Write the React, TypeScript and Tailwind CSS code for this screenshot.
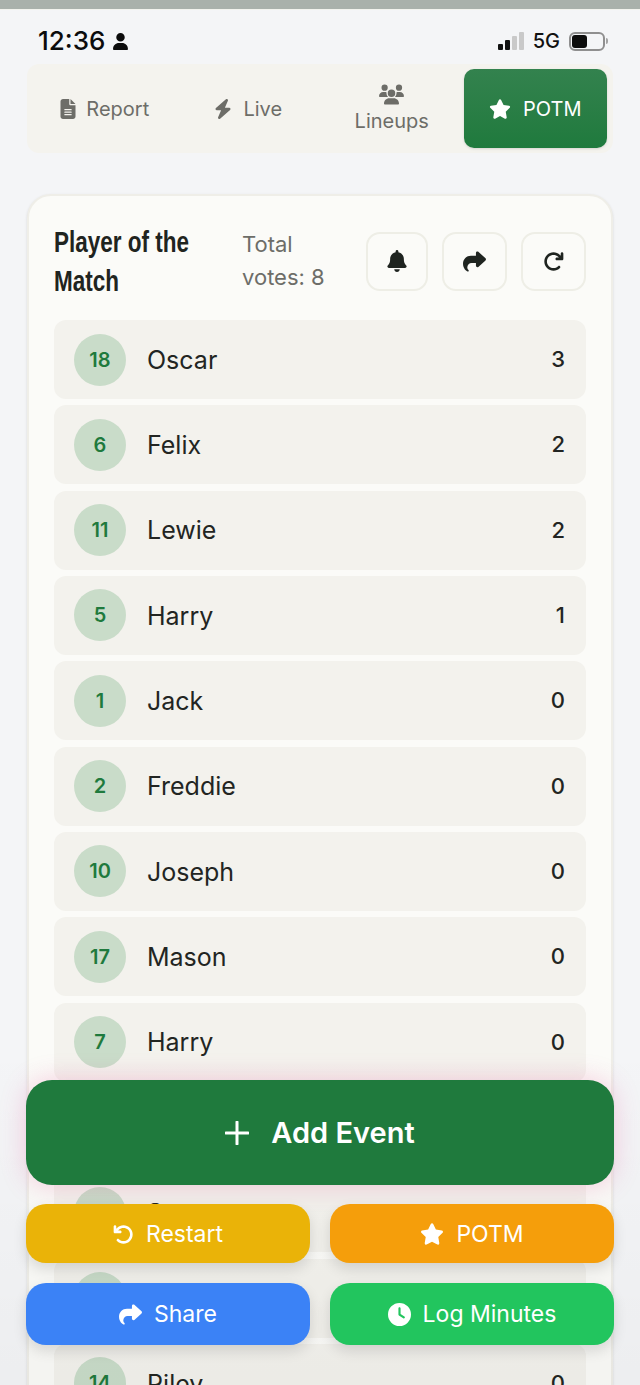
import type { ReactNode } from "react";
import { FaArrowRotateLeft, FaArrowRotateRight, FaBell, FaBolt, FaClock, FaFileLines, FaShare, FaStar, FaUser, FaUsers } from "react-icons/fa6";

const players = [
  { no: 18, name: "Oscar", votes: 3 },
  { no: 6, name: "Felix", votes: 2 },
  { no: 11, name: "Lewie", votes: 2 },
  { no: 5, name: "Harry", votes: 1 },
  { no: 1, name: "Jack", votes: 0 },
  { no: 2, name: "Freddie", votes: 0 },
  { no: 10, name: "Joseph", votes: 0 },
  { no: 17, name: "Mason", votes: 0 },
  { no: 7, name: "Harry", votes: 0 },
  { no: 9, name: "Noah", votes: 0 },
  { no: 8, name: "Sam", votes: 0 },
  { no: 4, name: "Leo", votes: 0 },
  { no: 14, name: "Riley", votes: 0 },
];

function StatusBar() {
  return (
    <div className="flex h-[54px] items-center justify-between pl-[38px] pr-[32px] pt-[8px]">
      <div className="flex items-center gap-[7px] text-[26px] font-medium leading-none text-[#0c0c0c]">
        <span>12:36</span>
        <FaUser className="size-[17px]" />
      </div>
      <div className="flex items-center gap-[9px]">
        <div className="flex items-end gap-[2px]">
          <div className="h-[6px] w-[5px] rounded-[1px] bg-[#111]" />
          <div className="h-[10px] w-[5px] rounded-[1px] bg-[#111]" />
          <div className="h-[14px] w-[5px] rounded-[1px] bg-[#c9c9c9]" />
          <div className="h-[18px] w-[5px] rounded-[1px] bg-[#c9c9c9]" />
        </div>
        <span className="text-[20px] font-medium leading-none text-[#111]">5G</span>
        <div className="flex items-center gap-[1px]">
          <div className="h-[19px] w-[36px] rounded-[6px] border-2 border-[#8f8f8f] p-[1px]">
            <div className="h-full w-[15px] rounded-[3px] bg-[#0c0c0c]" />
          </div>
          <div className="h-[6px] w-[2px] rounded-r bg-[#a3a3a3]" />
        </div>
      </div>
    </div>
  );
}

function Tabs() {
  return (
    <div className="mx-[27px] grid h-[89px] grid-cols-4 items-center rounded-[12px] bg-[#f4f3ee] px-[6px] text-[20px] text-[#6d6d68]">
      <div className="flex items-center justify-center gap-[8px] pr-[2px]">
        <FaFileLines className="size-[20px]" />
        <span>Report</span>
      </div>
      <div className="flex items-center justify-center gap-[10px] pr-[1px]">
        <FaBolt className="size-[20px]" />
        <span>Live</span>
      </div>
      <div className="flex flex-col items-center pb-[1px]">
        <FaUsers className="size-[25px]" />
        <span className="leading-[28px]">Lineups</span>
      </div>
      <div className="flex h-[79px] items-center justify-center gap-[12px] rounded-[10px] bg-gradient-to-b from-[#33824e] to-[#1f7a3d] text-white shadow-sm">
        <FaStar className="size-[22px]" />
        <span>POTM</span>
      </div>
    </div>
  );
}

function IconButton({ width, children }: { width: string; children: ReactNode }) {
  return (
    <div className={`flex h-[59px] items-center justify-center rounded-[14px] border-2 border-[#eeeee6] text-[#1f2420] ${width}`}>
      {children}
    </div>
  );
}

function PlayerRow({ no, name, votes }: { no: number; name: string; votes: number }) {
  return (
    <div className="flex h-[79px] items-center rounded-[12px] bg-[#f3f2ed] pl-[20px] pr-[21px]">
      <div className="flex size-[52px] shrink-0 items-center justify-center rounded-full bg-[#c9dcc9] text-[20px] font-semibold text-[#1f7a3d]">
        {no}
      </div>
      <span className="ml-[21px] flex-1 pt-[2px] text-[25px] text-[#222522]">{name}</span>
      <span className="text-[22px] font-medium text-[#222522]">{votes}</span>
    </div>
  );
}

function ActionButton({ color, height, icon, label }: { color: string; height: string; icon: ReactNode; label: string }) {
  return (
    <div className={`flex items-center justify-center gap-[12px] rounded-[20px] pt-[1px] text-[23px] text-white shadow-[0_6px_14px_rgba(0,0,0,0.12)] ${color} ${height}`}>
      {icon}
      <span>{label}</span>
    </div>
  );
}

export default function App() {
  return (
    <div className="relative h-[1385px] overflow-hidden bg-[#f4f5f7] font-['Inter',sans-serif]">
      <div className="h-[10px] border-b border-[#f2f3ee] bg-[#a9b1ab]" />
      <StatusBar />
      <Tabs />

      <div className="mx-[27px] mt-[41px] rounded-[24px] border-2 border-[#efeee8] bg-[#fbfbf8] px-[25px] pt-[26px] pb-6 shadow-sm">
        <div className="mb-[20px] flex items-center">
          <div className="w-[188px]">
            <h2 className="w-[200px] origin-left scale-x-[0.75] font-['Liberation_Sans',sans-serif] text-[30px] font-bold leading-[39px] text-[#1f2420]">
              Player of the Match
            </h2>
          </div>
          <p className="w-[124px] pr-[24px] text-[22px] leading-[33px] text-[#6d6d68]">Total votes: 8</p>
          <div className="flex gap-[14px]">
            <IconButton width="w-[62px]">
              <FaBell className="size-[22px]" />
            </IconButton>
            <IconButton width="w-[65px]">
              <FaShare className="size-[23px]" />
            </IconButton>
            <IconButton width="w-[65px]">
              <FaArrowRotateRight className="size-[21px]" />
            </IconButton>
          </div>
        </div>
        <div className="flex flex-col gap-[6.33px]">
          {players.map((p) => (
            <PlayerRow key={p.no} no={p.no} name={p.name} votes={p.votes} />
          ))}
        </div>
      </div>

      <div className="pointer-events-none absolute inset-x-0 bottom-0 h-[345px] bg-gradient-to-b from-transparent to-black/[0.03]" />

      <div className="absolute left-[26px] right-[26px] top-[1080px]">
        <div className="flex h-[105px] items-center justify-center gap-[22px] rounded-[26px] bg-[#1f7a3d] text-[29px] font-semibold text-white shadow-[0_0_26px_rgba(236,72,153,0.25)]">
          <svg viewBox="0 0 24 24" className="size-[24px]" fill="none" stroke="currentColor" strokeWidth="3" strokeLinecap="round">
            <path d="M12 1v22M1 12h22" />
          </svg>
          <span>Add Event</span>
        </div>
        <div className="mt-[19px] grid grid-cols-2 gap-[20px]">
          <ActionButton color="bg-[#eab308]" height="h-[59px]" icon={<FaArrowRotateLeft className="size-[21px]" />} label="Restart" />
          <ActionButton color="bg-[#f59e0b]" height="h-[59px]" icon={<FaStar className="size-[24px]" />} label="POTM" />
          <ActionButton color="bg-[#3b82f6]" height="h-[62px]" icon={<FaShare className="size-[23px]" />} label="Share" />
          <ActionButton color="bg-[#22c55e]" height="h-[62px]" icon={<FaClock className="size-[23px]" />} label="Log Minutes" />
        </div>
      </div>
    </div>
  );
}
